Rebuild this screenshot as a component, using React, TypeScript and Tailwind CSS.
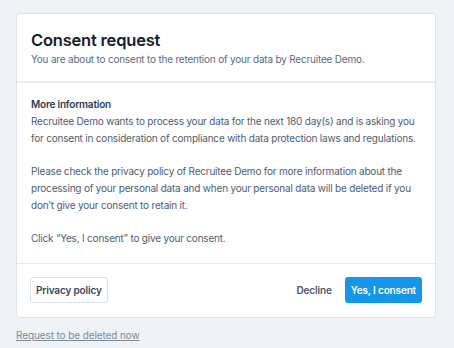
export default function App() {
  return (
    <div
      className="min-h-screen bg-[#eff2f6] pt-[13px] pl-4"
      style={{ fontFamily: "Inter, 'Noto Sans', sans-serif" }}
    >
      <div className="w-[420px] rounded-[4px] border border-[#dce3ea] bg-white">
        {/* Header */}
        <div className="border-b-2 border-[#e8edf2] px-[14px] pt-[15px] pb-[14px]">
          <h1 className="text-[16.5px] font-semibold leading-[22px] tracking-[-0.2px] text-[#17202e]">Consent request</h1>
          <p className="mt-[1px] text-[10px] leading-[15px] tracking-[-0.2px] text-[#5d6b7d]">
            You are about to consent to the retention of your data by Recruitee Demo.
          </p>
        </div>

        {/* Body */}
        <div className="border-b border-[#e3e8ee] px-[14px] pt-[13px] pb-[16px] text-[10px] leading-[16.8px] tracking-[-0.2px] text-[#4f5d70]">
          <h2 className="font-semibold text-[#2d3b4e]">More information</h2>
          <p>
            Recruitee Demo wants to process your data for the next 180 day(s) and is asking you for consent in consideration of compliance with data protection laws and regulations.
          </p>
          <p className="mt-[16.8px]">
            Please check the privacy policy of Recruitee Demo for more information about the processing of your personal data and when your personal data will be deleted if you don’t give your consent to retain it.
          </p>
          <p className="mt-[16.8px]">Click “Yes, I consent” to give your consent.</p>
        </div>

        {/* Footer */}
        <div className="flex items-center justify-between px-[13px] pt-[13px] pb-[14px]">
          <button className="h-[26px] rounded-[3px] border border-[#d9e1ea] bg-white px-[5px] text-[10px] font-semibold tracking-[-0.15px] text-[#3a475a]">
            Privacy policy
          </button>
          <div className="flex items-center gap-[13px]">
            <button className="h-[26px] text-[10px] font-semibold tracking-[-0.15px] text-[#4a576a]">Decline</button>
            <button className="h-[26px] rounded-[3px] bg-[#1596ea] px-[6px] text-[10px] font-semibold tracking-[-0.15px] text-white">
              Yes, I consent
            </button>
          </div>
        </div>
      </div>

      <a href="#" className="mt-[9px] inline-block text-[10px] leading-[17px] tracking-[-0.1px] text-[#7d8a9c] underline">
        Request to be deleted now
      </a>
    </div>
  );
}
